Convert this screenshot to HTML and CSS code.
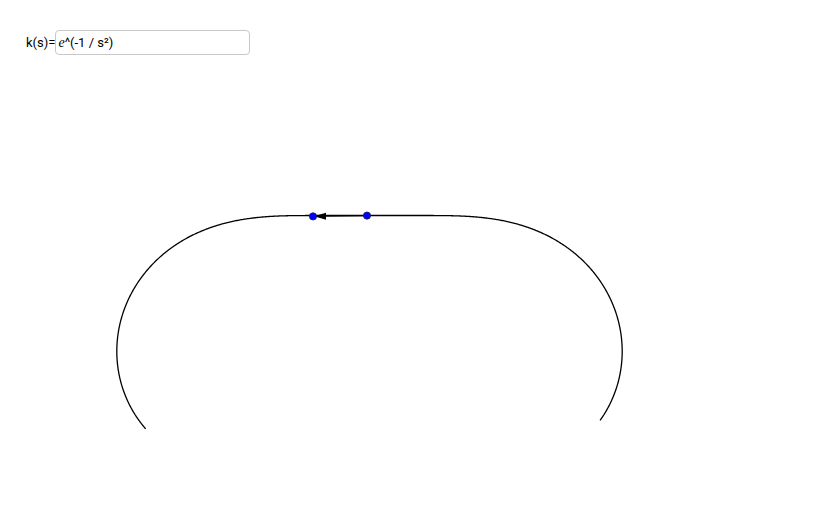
FILE: index.html
```html
<!DOCTYPE html>
<html>
<head>
<meta charset="utf-8">
<link rel="stylesheet" href="styles.css">
</head>
<body>
<div class="app">
  <svg class="canvas" width="815" height="526" viewBox="0 0 815 526">
    <path id="curve" class="curve" d=""/>
    <line class="vec" x1="367" y1="215.6" x2="322" y2="216.2"/>
    <polygon class="head" points="314,216.3 326,212.8 326,219.8"/>
    <circle class="pt" cx="313" cy="216.4" r="3.6"/>
    <circle class="pt" cx="367" cy="215.6" r="3.6"/>
  </svg>
  <div class="input-row">
    <span class="label">k(s)=</span>
    <div class="field"><span class="mathe">e</span>^(-1 / s²)</div>
  </div>
</div>
<script src="script.js"></script>
</body>
</html>
```

FILE: styles.css
```css
html, body {
  margin: 0;
  padding: 0;
  background: #ffffff;
}
.app {
  position: relative;
  width: 815px;
  height: 526px;
  overflow: hidden;
  font-family: Roboto, "Liberation Sans", sans-serif;
}
.canvas {
  position: absolute;
  left: 0;
  top: 0;
}
.curve {
  fill: none;
  stroke: #000000;
  stroke-width: 1.3;
}
.vec {
  stroke: #000000;
  stroke-width: 1.3;
}
.head {
  fill: #000000;
}
.pt {
  fill: #0000ff;
  stroke: #1a1a4d;
  stroke-width: 0.8;
}
.input-row {
  position: relative;
  display: flex;
  align-items: center;
  padding: 30px 0 0 26px;
}
.label {
  font-size: 13px;
  color: #000000;
}
.field {
  box-sizing: border-box;
  width: 195px;
  height: 25px;
  border: 1px solid #c8c8c8;
  border-radius: 4px;
  padding: 0 0 0 2px;
  font-size: 13px;
  line-height: 23px;
  color: #000000;
  background: #ffffff;
}
.mathe {
  font-family: "Liberation Serif", serif;
  font-style: italic;
  font-size: 14px;
}
```

FILE: script.js
```js
(function () {
  var ox = 369.5, oy = 215.5, U = 108;
  var sMin = -3.70, sMax = 3.80;
  var h = 0.002;
  function k(t) { return t === 0 ? 0 : Math.exp(-1 / (t * t)); }
  function integrate(sEnd) {
    var pts = [];
    var n = Math.round(Math.abs(sEnd) / h);
    var dir = sEnd < 0 ? -1 : 1;
    var th = 0, x = 0, y = 0, s = 0;
    pts.push([0, 0]);
    for (var i = 0; i < n; i++) {
      var ds = dir * h;
      var th1 = th + (ds / 6) * (k(s) + 4 * k(s + ds / 2) + k(s + ds));
      var thm = th + (ds / 2) * (k(s) + k(s + ds / 2)) / 2;
      x += (ds / 6) * (Math.cos(th) + 4 * Math.cos(thm) + Math.cos(th1));
      y += (ds / 6) * (Math.sin(th) + 4 * Math.sin(thm) + Math.sin(th1));
      th = th1; s += ds;
      if (i % 5 === 4) pts.push([x, y]);
    }
    return pts;
  }
  var a = integrate(sMax), b = integrate(sMin);
  var d = "";
  for (var i = a.length - 1; i >= 0; i--) {
    var X = ox - U * a[i][0], Y = oy + U * a[i][1];
    d += (d ? "L" : "M") + X.toFixed(2) + " " + Y.toFixed(2);
  }
  for (var j = 1; j < b.length; j++) {
    var X2 = ox - U * b[j][0], Y2 = oy + U * b[j][1];
    d += "L" + X2.toFixed(2) + " " + Y2.toFixed(2);
  }
  document.getElementById("curve").setAttribute("d", d);
})();
```
